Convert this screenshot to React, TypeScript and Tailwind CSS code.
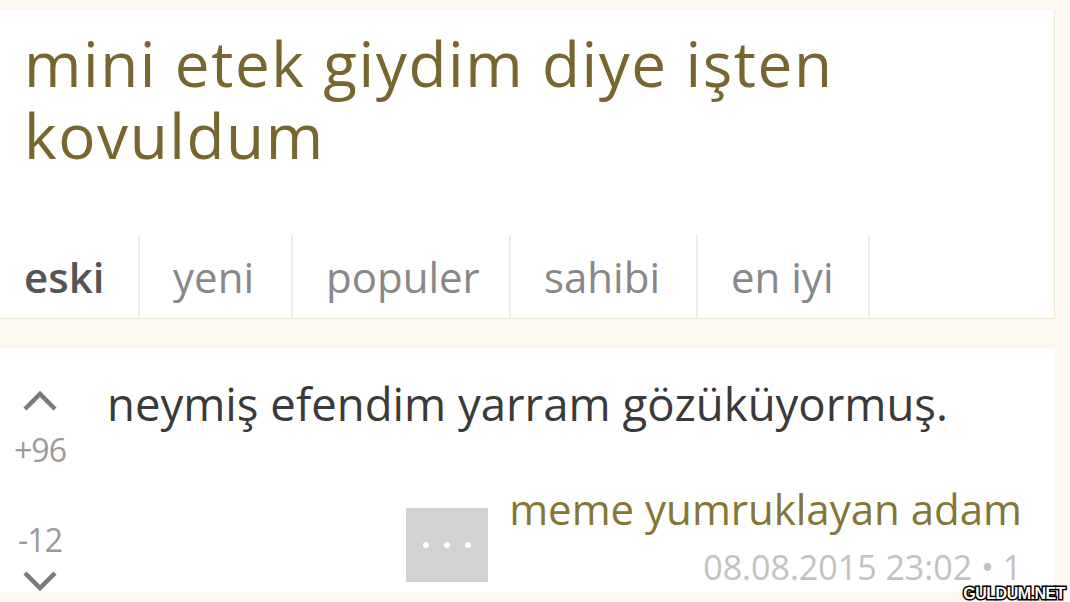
export default function App() {
  const tabs = [
    { label: 'yeni', w: 'w-[153px]' },
    { label: 'populer', w: 'w-[218px]' },
    { label: 'sahibi', w: 'w-[187px]' },
    { label: 'en iyi', w: 'w-[172px]' },
  ];

  return (
    <div className="relative h-[602px] w-[1070px] overflow-hidden bg-[#fdf8ef] font-['Open_Sans',sans-serif]">
      {/* baslik karti */}
      <div className="mr-[15px] mt-[10px] border-b border-r border-[#f1e8d8] bg-white">
        <h1 className="pl-[24px] pt-[17px] text-[62px] leading-[72px] tracking-[1.6px] text-[#776630]">
          <span className="block">mini etek giydim diye işten</span>
          <span className="block">kovuldum</span>
        </h1>

        {/* siralama sekmeleri */}
        <div className="mt-[64px] flex h-[83px]">
          <div className="w-[140px] border-r-2 border-[#ececec] pl-[24px] pt-[23px] text-[42px] leading-[38px] font-semibold text-[#555]">
            eski
          </div>
          {tabs.map((t) => (
            <div
              key={t.label}
              className={`${t.w} border-r-2 border-[#ececec] pl-[33px] pt-[23px] text-[42px] leading-[38px] text-[#888]`}
            >
              {t.label}
            </div>
          ))}
        </div>
      </div>

      {/* entry */}
      <div className="mr-[15px] mt-[29px] flex bg-white pt-[29px]">
        <div className="flex w-[80px] flex-col items-center pt-[13px]">
          <svg width="36" height="22" viewBox="0 0 36 22">
            <polyline points="3,19 18,4 33,19" fill="none" stroke="#7a7a7a" strokeWidth="4.5" />
          </svg>
          <span className="mt-[22px] text-[32px] leading-none tracking-[-1px] text-[#9a9a9a]">+96</span>
          <span className="mt-[58px] text-[32px] leading-none tracking-[-1px] text-[#9a9a9a]">-12</span>
          <svg className="mt-[14px]" width="36" height="22" viewBox="0 0 36 22">
            <polyline points="3,3 18,18 33,3" fill="none" stroke="#7a7a7a" strokeWidth="4.5" />
          </svg>
        </div>

        <div className="ml-[27px] flex flex-1 flex-col pr-[33px]">
          <p className="text-[45.5px] leading-[52px] text-[#3a3a3a]">neymiş efendim yarram gözüküyormuş.</p>
          <div className="mt-[59px] flex justify-end gap-[21px]">
            <div className="mt-[20px] flex h-[74px] w-[82px] items-center justify-center gap-[15px] bg-[#d2d2d2]">
              <span className="h-[6px] w-[6px] rounded-full bg-white" />
              <span className="h-[6px] w-[6px] rounded-full bg-white" />
              <span className="h-[6px] w-[6px] rounded-full bg-white" />
            </div>
            <div className="flex flex-col items-end">
              <span className="text-[42px] leading-none text-[#857637]">meme yumruklayan adam</span>
              <span className="mt-[23px] text-[34px] leading-[28px] text-[#c2c2c2]">08.08.2015 23:02 • 1</span>
            </div>
          </div>
        </div>
      </div>

      {/* filigran */}
      <span className="absolute bottom-0 right-[5px] font-['Liberation_Sans',sans-serif] text-[16px] font-bold leading-none tracking-[-0.5px] text-white [-webkit-text-stroke:3px_black] [paint-order:stroke_fill]">
        GULDUM.NET
      </span>
    </div>
  );
}
